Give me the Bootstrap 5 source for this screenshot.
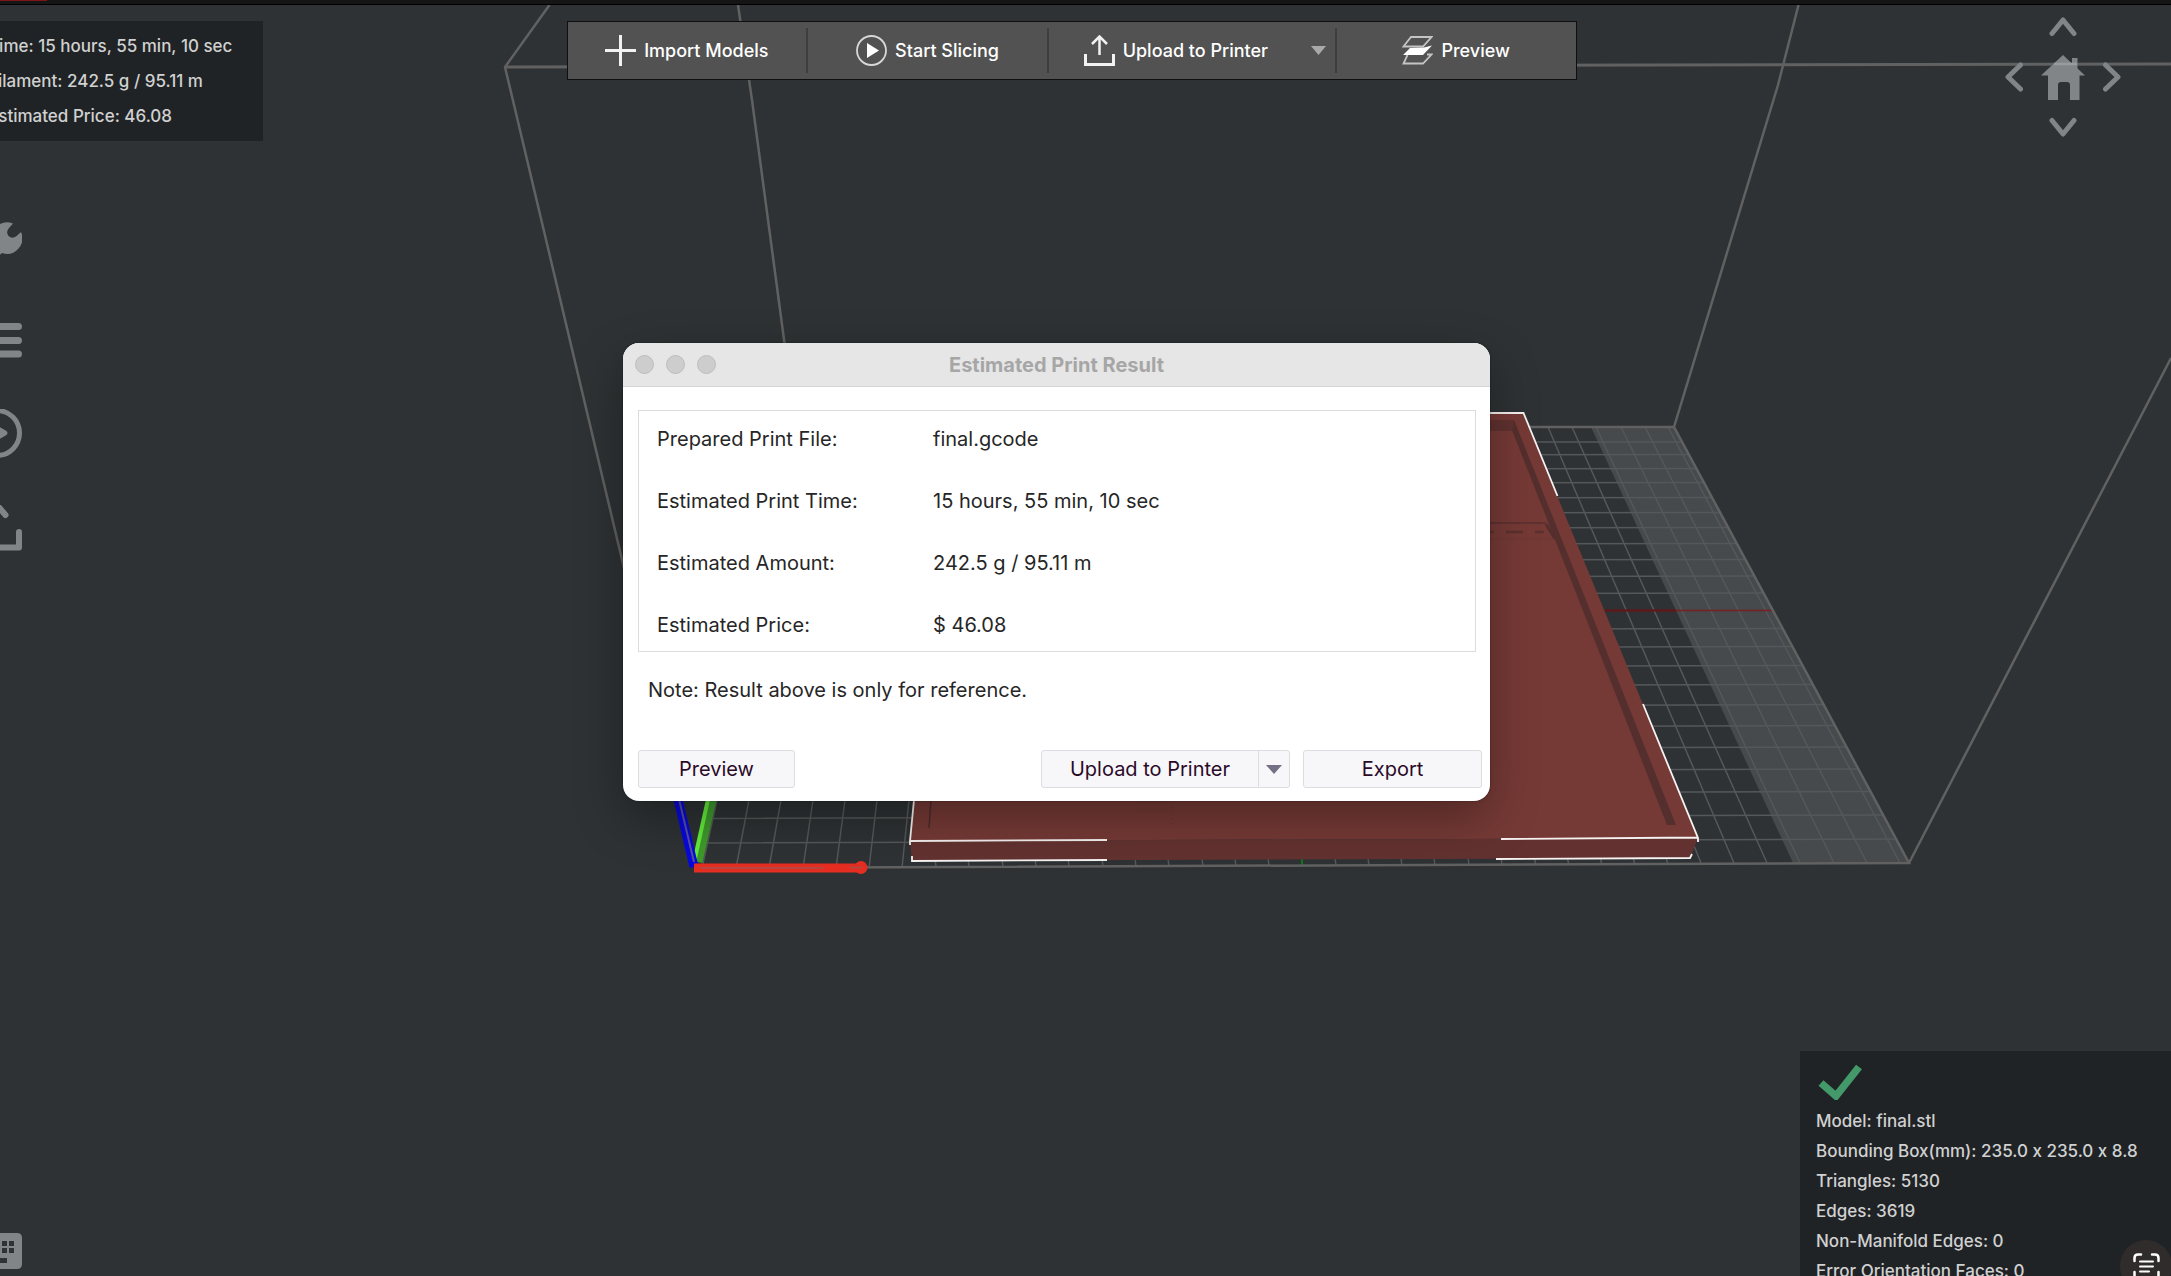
<!DOCTYPE html>
<html lang="en">
<head>
<meta charset="utf-8">
<meta name="viewport" content="width=device-width, initial-scale=1">
<title>Slicer – Estimated Print Result</title>
<link href="https://cdn.jsdelivr.net/npm/bootstrap@5.3.0/dist/css/bootstrap.min.css" rel="stylesheet">
<script src="https://cdn.jsdelivr.net/npm/bootstrap@5.3.0/dist/js/bootstrap.bundle.min.js"></script>
<style>
  body { background: #2e3234; font-family: Inter, "Liberation Sans", sans-serif; color: #d0d1d1; }
  button { font: inherit; color: inherit; }
  .workspace { --bleed: 28px; }
  .scene { inset: 0; }
  .window-edge { height: 5px; background: #151515; border-bottom: 1px solid #000; }
  .window-edge span { display: block; width: 47px; height: 1px; background: #7d1416; }
  .ui-layer { margin-left: calc(-1 * var(--bleed)); height: calc(100vh - 5px); }
  .top-row { display: grid; grid-template-columns: 1fr 1010px 1fr; padding-top: 16px; }

  .info-panel { background: #202325; font-size: 17px; font-weight: 500; }
  .stats-panel { width: 291px; height: 120px; padding: 8px 16px; line-height: 35px; }
  .model-panel { width: 371px; padding: 12px 16px 0; line-height: 30px; height: 225px; }
  .model-panel svg { margin: 0 0 6px 2px; }

  .tool-strip { height: 59px; background: #525252; border: 1px solid #0e0f10; color: #fff; font-size: 18px; font-weight: 500; }
  .tool-strip .tool-cell { flex: 1 1 0; border-left: 2px solid #3e3e3e; margin: 6px 0; display: flex; }
  .tool-strip .tool-cell:first-child { border-left: 0; }
  .tool-strip .tool-wide { flex: 0 0 288px; }
  .tool-btn { background: none; border: 0; padding: 0; flex: 1; display: flex; align-items: center; justify-content: center; gap: 8px; white-space: nowrap; }
  .tool-drop { flex: 0 0 32px; padding: 0; background: none; border: 0; display: flex; align-items: center; justify-content: center; }

  .view-nav { display: grid; grid-template-columns: 36px 44px 36px; grid-template-rows: 24px 80px 24px; align-items: center; justify-items: center; margin: -8px 50px 0 0; }
  .view-nav button, .side-rail button, .scan-btn { background: none; border: 0; padding: 0; display: flex; color: #828588; }
  .view-nav .nav-up { grid-area: 1 / 2; align-self: end; }
  .view-nav .nav-left { grid-area: 2 / 1; justify-self: start; }
  .view-nav .nav-home { grid-area: 2 / 2; }
  .view-nav .nav-right { grid-area: 2 / 3; justify-self: end; }
  .view-nav .nav-down { grid-area: 3 / 2; align-self: start; }

  .side-rail { margin-top: 76px; gap: 40px; width: 50px; }
  .side-rail.rail-foot { margin-top: 0; margin-bottom: 7px; }
  .info-panel .scan-btn { right: -1px; bottom: -16px; width: 52px; height: 52px; border-radius: 50%; background: #302c2c; color: #fff; align-items: center; justify-content: center; }
  .info-panel .scan-btn svg { margin: 0; }

  .result-window { left: 623px; top: 343px; width: 867px; border-radius: 16px; background: #fff; color: #262626; font-size: 20px; box-shadow: 0 18px 50px rgba(0,0,0,.32), 0 0 2px rgba(0,0,0,.5); overflow: hidden; }
  .title-strip { height: 44px; background: #e6e6e6; border-bottom: 1px solid #d6d6d6; padding: 0 12px; display: grid; grid-template-columns: 1fr auto 1fr; align-items: center; }
  .title-strip h1 { font-size: 20px; font-weight: 700; line-height: 24px; margin: 0; color: #a6a6a6; }
  .win-dot { width: 19px; height: 19px; border-radius: 50%; border: 1px solid #bdbdbd; background: #cdcdcd; padding: 0; }
  .result-body { padding: 23px 8px 13px 15px; }
  .result-list { border: 1px solid #dcdcdc; margin: 0 6px 0 0; padding: 15px 18px 13px; display: grid; grid-template-columns: 276px 1fr; row-gap: 36px; line-height: 26px; }
  .result-list dt { font-weight: 400; }
  .result-list dd { margin: 0; }
  .result-note { margin: 25px 0 47px 10px; line-height: 26px; }
  .dlg-btn { height: 38px; border: 1px solid #dddde1; border-radius: 3px; background: #f7f7fa; color: #2b0a28; padding: 0; line-height: 26px; }
  .dlg-preview { width: 157px; } .dlg-upload { width: 218px; border-radius: 3px 0 0 3px; }
  .dlg-drop { width: 32px; margin-left: -1px; border-radius: 0 3px 3px 0; display: flex; align-items: center; justify-content: center; }
  .dlg-export { width: 179px; margin-left: 13px; }
</style>
</head>
<body>
<main class="workspace position-relative vh-100 overflow-hidden">

  <!-- Build volume, bed grid, model and axes -->
  <svg class="scene position-absolute w-100 h-100" viewBox="0 0 2171 1276" preserveAspectRatio="xMidYMid slice" aria-hidden="true">
    <polygon points="1591,427 1674,427 1909,863 1793,863" fill="#464a4c"/>
    <g stroke="#55585a" stroke-width="1.500" fill="none">
      <path d="M780 442H1682M777 455.500L1689 454.500M774 469.500L1697 468.500M770 484L1704 482.500M767 499L1712 497.500M764 514L1721 512.500M761 529L1728 527.500M758 545L1737 543.500M755 561L1745 559.500M751 578L1754 576M748 595L1763 593M741 631L1782 628.500M737 649L1792 646.500M734 668L1803 665.500M730 687L1813 684.500M726 708L1824 704.500M722 729L1835 725.500M718 750L1847 747M714 772L1858 769M709 795L1871 791.500M709 818.500L1883 815M702 843L1896 839"/>
      <path d="M1525 427L1701 863M1548 427L1734 863M1572 427L1767 863M1596 427L1800 863M1621 427L1834 863M1645 427L1867 863M1668 427L1900 863"/>
      <path d="M717 800L702 868M749 800L736 868M781 800L769 868M813 800L803 868M845 800L836 868M877 800L869 868M909 800L902 868"/>
      <path d="M935 858l1 9M968 858l1 9M1002 858l1 9M1035 858l1 9M1068 858l1 9M1102 858l1 9M1135 858l1 9M1168 858l1 9M1202 858l1 9M1235 858l1 9M1268 858l1 8M1335 858l1 8M1368 858l1 8M1401 858l1 8M1434 858l1 8M1468 857l1 8M1501 857l1 8M1534 857l2 8M1567 857l2 8M1600 857l2 8M1633 857l2 8M1666 857l2 8"/>
    </g>
    <path d="M1605 610.500H1773" stroke="#7a1f22" stroke-width="1.500"/>
    <path d="M1605 610.500H1676" stroke="#601518" stroke-width="2"/>
    <path d="M1302 859v7" stroke="#0c7a14" stroke-width="2"/>
    <g stroke="#616161" stroke-width="2.500" fill="none">
      <path d="M549.500 5L505 67L695 867M738 5L752 100L787 362M1798.500 5L1778 85L1674 427M2171 358L1909 863"/>
      <path d="M505 67L2171 64" stroke-width="3"/>
      <path d="M1490 427H1674L1909 863L695 868"/>
    </g>

    <polygon points="1000,413 1523,413 1698,838 910,841 913,800" fill="#763a36"/>
    <polygon points="910,841 1698,838 1690,858 912,861" fill="#633230"/>
    <path d="M1480 420H1514L1512 431H1480z" fill="#603230"/>
    <path d="M1514 420L1676 825H1667L1512 430z" fill="#552f2d"/>
    <path d="M1480 523H1546" stroke="#603130" stroke-width="2"/>
    <path d="M1484 532h10M1506 532h17M1535 532h9" stroke="#5b302e" stroke-width="2.500"/>
    <path d="M1480 539H1552" stroke="#6d3835"/>
    <path d="M1546 524L1555 539" stroke="#552f2d" stroke-width="3"/>
    <path d="M931 800L929 828" stroke="#4f2c2b" stroke-width="1.500"/>
    <path d="M1137 802h34M1137 810h34M1172 806v18" stroke="#6c3935" stroke-dasharray="2 2" stroke-width="3" opacity=".6"/>
    <g stroke="#f6f2f2" stroke-width="1.800" fill="none">
      <path d="M1488 413H1523.500L1557.500 496M1643 704L1698 838v4M1501 839L1698 837.500M1496 859L1690 858l2-4"/>
      <path d="M914 800L910 841v4M910 841L1107 840M912 856v5L1107 860"/>
    </g>

    <path d="M713 795L698 862" stroke="#3f9a2c" stroke-width="9"/>
    <path d="M709 795L695 858" stroke="#61ee3b" stroke-width="4"/>
    <path d="M677 795L694 867" stroke="#0808dd" stroke-width="9"/>
    <path d="M678 795L694 862" stroke="#5450a0" stroke-width="2"/>
    <path d="M694 868H862" stroke="#e62e22" stroke-width="9"/>
    <circle cx="861" cy="867.500" r="6.500" fill="#e62e22"/>
    <path d="M700 868H823M850 867.500H862" stroke="#a5524b" stroke-width="1.500"/>
  </svg>

  <div class="window-edge position-relative"><span></span></div>

  <div class="ui-layer position-relative d-flex flex-column">
    <div class="top-row">
      <section class="info-panel stats-panel text-nowrap" aria-label="Print statistics">
        <div>Time: 15 hours, 55 min, 10 sec</div>
        <div>Filament: 242.5 g / 95.11 m</div>
        <div>Estimated Price: 46.08</div>
      </section>

      <nav class="tool-strip d-flex" aria-label="Main actions">
        <div class="tool-cell">
          <button type="button" class="tool-btn">
            <svg width="31" height="31" viewBox="0 0 31 31" stroke="#f2f2f2" stroke-width="3"><path d="M15.500 0V31M0 15.500H31"/></svg>
            Import Models
          </button>
        </div>
        <div class="tool-cell">
          <button type="button" class="tool-btn">
            <svg width="31" height="31" viewBox="0 0 31 31"><circle cx="15.500" cy="15.500" r="14.500" fill="none" stroke="#d8d8d8" stroke-width="1.800"/><path d="M11 8L23 15.500L11 23z" fill="#fff"/></svg>
            Start Slicing
          </button>
        </div>
        <div class="tool-cell tool-wide">
          <button type="button" class="tool-btn">
            <svg width="31" height="31" viewBox="0 0 31 31" fill="none" stroke="#f2f2f2" stroke-width="3"><path d="M1.500 19V29.500H29.500V19"/><path d="M15.500 20V2M8 9L15.500 1.500L23 9" stroke-width="2.500"/></svg>
            Upload to Printer
          </button>
          <button type="button" class="tool-drop" aria-label="More upload options">
            <svg width="15" height="9" viewBox="0 0 15 9"><path d="M0 0H15L7.500 9z" fill="#a9a9a9"/></svg>
          </button>
        </div>
        <div class="tool-cell">
          <button type="button" class="tool-btn">
            <svg width="31" height="31" viewBox="0 0 31 31" fill="none" stroke="#c4c4c4" stroke-width="1.800"><path d="M9 2H29.500L21 11.500H1.500zM5.500 20L1.500 28.500H21L29.500 19.500H25"/><path d="M8 13L22 12.500L30 10.500L21 20H1z" fill="#fff" stroke="none"/></svg>
            Preview
          </button>
        </div>
      </nav>

      <div class="d-flex justify-content-end align-items-start">
        <div class="view-nav" role="group" aria-label="View rotation">
          <button type="button" class="nav-up" aria-label="Rotate up"><svg width="28" height="20" viewBox="0 0 28 20" fill="none" stroke="currentColor" stroke-width="5" stroke-linecap="round" stroke-linejoin="round"><path d="M3 16.500L14 3L25 16.500"/></svg></button>
          <button type="button" class="nav-left" aria-label="Rotate left"><svg width="18" height="30" viewBox="0 0 18 30" fill="none" stroke="currentColor" stroke-width="5" stroke-linecap="round" stroke-linejoin="round"><path d="M15.500 3L3 15L15.500 27"/></svg></button>
          <button type="button" class="nav-home" aria-label="Home view"><svg width="44" height="45" viewBox="0 0 44 45"><path fill="currentColor" d="M22 0L31 8.500V3H36.500V13.500L44 20.500H38.500V45H29V30Q29 27 26 27H20Q17 27 17 30V45H7V20.500H0z"/><path d="M13 9H36" stroke="#9a9b9c" stroke-width="2.500"/></svg></button>
          <button type="button" class="nav-right" aria-label="Rotate right"><svg width="18" height="30" viewBox="0 0 18 30" fill="none" stroke="currentColor" stroke-width="5" stroke-linecap="round" stroke-linejoin="round"><path d="M2.500 3L15 15L2.500 27"/></svg></button>
          <button type="button" class="nav-down" aria-label="Rotate down"><svg width="28" height="20" viewBox="0 0 28 20" fill="none" stroke="currentColor" stroke-width="5" stroke-linecap="round" stroke-linejoin="round"><path d="M3 3.500L14 17L25 3.500"/></svg></button>
        </div>
      </div>
    </div>

    <div class="d-flex flex-grow-1 justify-content-between">
      <div class="d-flex flex-column justify-content-between">
        <div class="side-rail d-flex flex-column">
          <button type="button" aria-label="Settings"><svg width="50" height="56" viewBox="0 0 50 56"><path fill="currentColor" d="M41 6.500A15.500 15.500 0 0 0 20 24L2 42a5 5 0 0 0 0 7l3 3a5 5 0 0 0 7 0L30 36A15.500 15.500 0 0 0 49 15L44 19.500Q40 22 36.500 19Q33.500 15 37 11z"/></svg></button>
          <button type="button" aria-label="Parameters"><svg width="50" height="56" viewBox="0 0 50 56" stroke="currentColor" stroke-width="7" stroke-linecap="round"><path d="M4 13.500H46.500M4 27.500H46.500M4 41H46.500"/></svg></button>
          <button type="button" aria-label="Slice"><svg width="50" height="56" viewBox="0 0 50 56"><circle cx="25" cy="24" r="22.500" fill="none" stroke="currentColor" stroke-width="5"/><path fill="currentColor" d="M18 12.500L34.500 22Q36.500 24 34.500 26L18 35.500z"/></svg></button>
          <button type="button" aria-label="Upload"><svg width="50" height="56" viewBox="0 0 50 56" fill="none" stroke="currentColor" stroke-width="6" stroke-linecap="round" stroke-linejoin="round"><path d="M3 27V42.500H47V27M25 28V3M17 9L25 0L33.500 10"/></svg></button>
        </div>
        <div class="side-rail rail-foot d-flex flex-column">
          <button type="button" aria-label="Keyboard shortcuts"><svg width="50" height="36" viewBox="0 0 50 36"><path fill="currentColor" fill-rule="evenodd" d="M5 0H45Q50 0 50 5V31Q50 36 45 36H5Q0 36 0 31V5Q0 0 5 0zM8 8v5h5V8zM15 8v5h5V8zM22 8v5h5V8zM30 8v5h5V8zM37 8v5h5V8zM8 15v5h5V15zM15 15v5h5V15zM22 15v5h5V15zM30 15v5h5V15zM37 15v5h5V15zM15 25v5h20V25z"/></svg></button>
        </div>
      </div>

      <section class="info-panel model-panel position-relative align-self-end text-nowrap" aria-label="Model information">
        <svg class="d-block" width="44" height="37" viewBox="0 0 44 37"><path d="M3 20L18 33L41 4" fill="none" stroke="#43996a" stroke-width="7.500"/></svg>
        <div>Model: final.stl</div>
        <div>Bounding Box(mm): 235.0 x 235.0 x 8.8</div>
        <div>Triangles: 5130</div>
        <div>Edges: 3619</div>
        <div>Non-Manifold Edges: 0</div>
        <div>Error Orientation Faces: 0</div>
        <button type="button" class="scan-btn position-absolute" aria-label="Scan text">
          <svg width="27" height="27" viewBox="0 0 27 27" fill="none" stroke="currentColor" stroke-width="2.500" stroke-linecap="round"><path d="M1.500 8V5Q1.500 1.500 5 1.500H8M19 1.500H22Q25.500 1.500 25.500 5V8M25.500 19V22Q25.500 25.500 22 25.500H19M8 25.500H5Q1.500 25.500 1.500 22V19"/><path d="M7 8.500H20M7 13.500H20M7 18.500H16" stroke-width="2"/></svg>
        </button>
      </section>
    </div>
  </div>

  <section class="result-window position-absolute" role="dialog" aria-labelledby="resultTitle">
    <header class="title-strip">
      <div class="d-flex align-items-center gap-2">
        <button type="button" class="win-dot me-1" aria-label="Close"></button>
        <button type="button" class="win-dot me-1" aria-label="Minimize"></button>
        <button type="button" class="win-dot" aria-label="Zoom"></button>
      </div>
      <h1 id="resultTitle">Estimated Print Result</h1>
    </header>
    <div class="result-body">
      <dl class="result-list">
        <dt>Prepared Print File:</dt><dd>final.gcode</dd>
        <dt>Estimated Print Time:</dt><dd>15 hours, 55 min, 10 sec</dd>
        <dt>Estimated Amount:</dt><dd>242.5 g / 95.11 m</dd>
        <dt>Estimated Price:</dt><dd>$ 46.08</dd>
      </dl>
      <p class="result-note">Note: Result above is only for reference.</p>
      <div class="d-flex justify-content-between">
        <button type="button" class="dlg-btn dlg-preview">Preview</button>
        <div class="d-flex">
          <button type="button" class="dlg-btn dlg-upload">Upload to Printer</button>
          <button type="button" class="dlg-btn dlg-drop" aria-label="More upload options"><svg width="16" height="9" viewBox="0 0 16 9"><path d="M0 0H16L8 9z" fill="#767085"/></svg></button>
          <button type="button" class="dlg-btn dlg-export">Export</button>
        </div>
      </div>
    </div>
  </section>
</main>
</body>
</html>
